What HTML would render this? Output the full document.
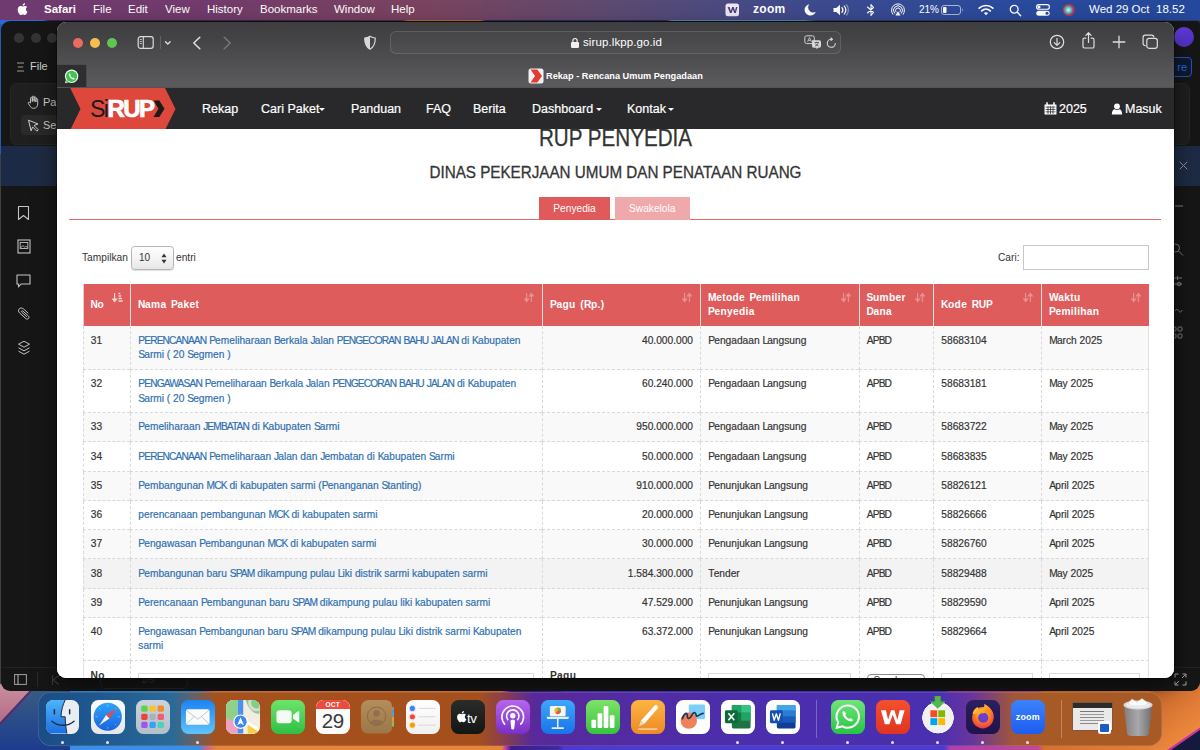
<!DOCTYPE html>
<html lang="id">
<head>
<meta charset="utf-8">
<title>Rekap - Rencana Umum Pengadaan</title>
<style>
*{box-sizing:border-box;margin:0;padding:0}
html,body{width:1200px;height:750px;overflow:hidden}
body{position:relative;font-family:"Liberation Sans",sans-serif;background:#3a2a6a;color:#fff}
.abs{position:absolute}
/* wallpaper */
#wall{left:0;top:0;width:1200px;height:750px;background:#2a55a8}
/* menubar */
#menubar{left:0;top:0;width:1200px;height:20px;background:linear-gradient(90deg,#6f3a70 0px,#713b6c 200px,#7a445f 430px,#5b4a72 620px,#3f4a8c 800px,#2b4a9c 1000px,#23489c 1200px);font-size:11.5px;line-height:19px;white-space:nowrap}
#menubar span{position:absolute;top:0}
/* back window */
#backwin{left:1px;top:21px;width:1198.500px;height:669.500px;background:#161616;border-radius:9px 3px 9px 9px;overflow:hidden}
/* safari */
#safari{left:57px;top:22px;width:1117px;height:656px;border-radius:9px;overflow:hidden;background:#fff;box-shadow:0 0 0 .5px rgba(0,0,0,.6),0 8px 22px rgba(0,0,0,.55)}
#toolbar{left:0;top:0;width:1117px;height:66px;background:linear-gradient(180deg,#3e3e40 0,#434345 15px,#535255 48px,#5b5a5d 64px,#505052 66px)}
#pinned{left:0;top:42px;width:30px;height:23px;background:#2e2e30;border-top:1px solid #4a4a4c;border-right:1px solid #4a4a4c}
#urlbar{left:333px;top:9px;width:451px;height:23px;border-radius:6px;background:rgba(255,255,255,.03);border:1px solid rgba(255,255,255,.12)}
#urltext{left:526px;top:13px;font-size:11.500px;line-height:15px;color:#fff;white-space:nowrap;letter-spacing:.1px}
#tabtitle{left:489px;top:47px;font-size:9.200px;line-height:14px;color:#fff;white-space:nowrap;font-weight:bold}
#navbar span{-webkit-text-stroke:.2px #fff;position:absolute;top:12.500px;font-size:12.500px;line-height:16px;color:#fff;white-space:nowrap}
#navbar i{position:absolute;top:19.500px;width:0;height:0;border-left:3px solid transparent;border-right:3px solid transparent;border-top:3.500px solid #fff}

#page .t{position:absolute;white-space:nowrap}
#h1{left:0;width:1117px;top:-7.700px;text-align:center;font-size:24.500px;line-height:34px;color:#333;transform:scaleX(.842);transform-origin:558.500px 0}
#h1,#h2{-webkit-text-stroke:.3px #333}
#h2{left:0;width:1117px;top:33.200px;text-align:center;font-size:16.500px;line-height:20px;color:#333;transform:scaleX(.9215);transform-origin:558px 0}
#tab1{left:482px;top:67.500px;width:71px;height:23px;background:#e05a5c;color:#fff;font-size:10.200px;line-height:23px;text-align:center}
#tab2{left:558px;top:67.500px;width:74.500px;height:23px;background:#f0a9aa;color:#fff;font-size:10.200px;line-height:23px;text-align:center}
#rule{left:12px;top:90px;width:1092px;height:1px;background:#e46c6c}
#lenlbl{left:25px;top:121.700px;font-size:10.200px;line-height:14px;color:#333}
#lensel{left:74px;top:116.500px;width:42.500px;height:24px;border:1px solid #b4b4b4;border-radius:3.500px;background:linear-gradient(180deg,#fff 0,#f4f4f4 50%,#e6e6e6 100%);box-shadow:0 1px 1px rgba(0,0,0,.12);font-size:10px;line-height:22px;color:#333;padding-left:7px}
#entri{left:119px;top:121.700px;font-size:10.200px;line-height:14px;color:#333}
#cari{left:941px;top:121.700px;font-size:10.200px;line-height:14px;color:#333}
#search{left:966px;top:116px;width:126px;height:24.500px;border:1px solid #c8c8c8;background:#fff}
#tbl{position:absolute;left:25.500px;top:154.700px;width:1066.500px;border-collapse:separate;border-spacing:0;table-layout:fixed;font-size:10.200px;line-height:14.200px;color:#333}
#tbl th{background:#de5c5c;color:#fff;font-weight:bold;text-align:left;vertical-align:middle;height:42.100px;padding:.6px 20px 0 7px;border-left:1.500px solid #e4e0e0;letter-spacing:.32px;word-spacing:1.500px;font-size:10.200px;position:relative}
#tbl th:first-child{border-left:1px solid #dcd0d0}
#tbl td{vertical-align:top;padding:7.300px 8px 0 7.300px;border-left:1px dashed #d9d9d9;border-bottom:1px dashed #d9d9d9;height:29.250px;white-space:nowrap}
#tbl td:last-child{border-right:1px solid #e2e2e2}
#tbl tr.two td{height:43px}
#tbl tbody tr:first-child td{height:44.400px;padding-top:8.400px}
#tbl tr.odd td{background:#f9f9f9}
#tbl tr.hov td{background:#f3f3f3}
#tbl td.r{text-align:right;padding-right:7px}
#tbl td{-webkit-text-stroke:.18px #333}
#tbl td a{color:#2f6fb0;text-decoration:none;-webkit-text-stroke:.18px #2f6fb0}
#tbl tfoot th:first-child{border-left:1px solid #e2e2e2}
#tbl tfoot th:last-child{border-right:1px solid #e2e2e2}
#tbl tfoot th{background:#fff;color:#333;height:30px;border-left:1px dashed #d9d9d9;vertical-align:top;padding-top:8px}
#tbl u{text-decoration:none;letter-spacing:-.87px}
#tbl th u{letter-spacing:-.3px}
.fi{height:20px;border:1px solid #dcdcdc;margin-top:4.500px;margin-right:-12px;background:#fff}
.sort{position:absolute;right:8px;top:8px;width:10px;height:11px;opacity:.32}
/*DOCKCSS*/
#dock{left:38px;top:692px;width:1124px;height:53.500px;border-radius:13px;background:linear-gradient(90deg,#1b4d86 0,#1f5890 60px,#2a6a98 135px,#6a6060 158px,#a5511d 178px,#a5501c 440px,#8a3f4a 465px,#58299a 495px,#4a2eac 700px,#4a2fb0 900px,#6a359c 935px,#a0563a 975px,#a85a26 1010px,#a85a26 1124px);box-shadow:0 0 0 .5px rgba(255,255,255,.22) inset}
.di{position:absolute;top:8px;width:33.500px;height:33.500px;border-radius:7.500px;overflow:hidden}
.dot{position:absolute;top:48.500px;width:3px;height:3px;border-radius:50%;background:#e8dff5}
/*DOCKCSSE*/
.tl{width:10px;height:10px;border-radius:50%;top:15.500px}
#navbar{left:0;top:66px;width:1117px;height:41px;background:#29292b}
#page{left:0;top:107px;width:1117px;height:549px;background:#fff;color:#333}
</style>
</head>
<body>
<div id="wall" class="abs"><svg class="abs" style="left:0;top:0" width="1200" height="750" viewBox="0 0 1200 750">
<defs>
<linearGradient id="wtop" x1="0" y1="0" x2="1" y2="0"><stop offset="0" stop-color="#2a6ad8"/><stop offset=".036" stop-color="#2a6ad8"/><stop offset=".04" stop-color="#3a2450"/><stop offset=".335" stop-color="#4a2a50"/><stop offset=".34" stop-color="#c06a30"/><stop offset=".4" stop-color="#c06a30"/><stop offset=".405" stop-color="#2a2a6a"/><stop offset=".555" stop-color="#2a2a6a"/><stop offset=".56" stop-color="#4a8ab0"/><stop offset=".67" stop-color="#4a8ab0"/><stop offset=".68" stop-color="#2a3a6a"/><stop offset="1" stop-color="#2a3a6a"/></linearGradient>
<linearGradient id="wbl" x1="0" y1="0" x2="0" y2="1"><stop offset="0" stop-color="#3b5f82"/><stop offset="1" stop-color="#1d3c8e"/></linearGradient>
<linearGradient id="wpk" x1="0" y1="0" x2="0" y2="1"><stop offset="0" stop-color="#c9909f"/><stop offset="1" stop-color="#b26c88"/></linearGradient>
<linearGradient id="wbot" x1="0" y1="0" x2="1200" y2="0" gradientUnits="userSpaceOnUse"><stop offset="0" stop-color="#1d3c8e"/><stop offset=".05" stop-color="#2a62c0"/><stop offset=".058" stop-color="#3b8ee8"/><stop offset=".166" stop-color="#3b8ee8"/><stop offset=".172" stop-color="#d0608a"/><stop offset=".18" stop-color="#e6843a"/><stop offset=".418" stop-color="#e6843a"/><stop offset=".421" stop-color="#d040a0"/><stop offset=".426" stop-color="#3a1f8a"/><stop offset=".465" stop-color="#3d2aa0"/><stop offset=".47" stop-color="#4a3cd0"/><stop offset=".787" stop-color="#4a3cd0"/><stop offset=".792" stop-color="#b040a8"/><stop offset=".865" stop-color="#c04898"/><stop offset=".87" stop-color="#d8702e"/><stop offset="1" stop-color="#e8853a"/></linearGradient>
<linearGradient id="wor" x1="0" y1="0" x2=".6" y2="1"><stop offset="0" stop-color="#c5622a"/><stop offset="1" stop-color="#f08c3e"/></linearGradient>
</defs>
<rect x="0" y="18" width="1200" height="6" fill="url(#wtop)"/>
<rect x="0" y="24" width="3" height="130" fill="#2a5ab0"/><rect x="0" y="154" width="3" height="540" fill="#404040"/>
<rect x="1197" y="24" width="3" height="670" fill="#2a52a8"/>
<rect x="0" y="684" width="1200" height="66" fill="url(#wbot)"/>
<rect x="0" y="684" width="70" height="66" fill="url(#wbl)"/>
<path d="M0 684h36L0 722.500z" fill="url(#wpk)"/>
<path d="M36 684L0 722.500v3L38.500 684z" fill="#5a2a6a"/>
<rect x="1150" y="684" width="50" height="66" fill="url(#wor)"/>
<path d="M1170 750l30-20.500v20.500z" fill="#141a3c"/>
<path d="M1167 750l33-22.500v2.500L1171 750z" fill="#c030a8"/>
</svg></div>
<div id="menubar" class="abs">
<svg class="abs" style="left:16px;top:2px" width="12" height="14" viewBox="0 0 12 14"><path fill="#fff" d="M9.9 7.4c0-1.5 1.2-2.2 1.3-2.3-.7-1-1.800-1.200-2.200-1.200-.9-.1-1.800.55-2.300.55s-1.200-.54-2-.52C3.700 3.950 2.700 4.500 2.200 5.400c-1.100 1.900-.3 4.600.75 6.100.5.750 1.100 1.580 1.900 1.550.77-.03 1.060-.5 1.990-.5s1.190.5 2 .48c.83-.01 1.350-.75 1.850-1.500.58-.86.820-1.700.830-1.740-.02-.01-1.600-.61-1.620-2.390zM8.400 2.900c.42-.51.700-1.220.630-1.930-.6.020-1.340.400-1.770.910-.39.450-.73 1.170-.64 1.860.670.050 1.360-.340 1.780-.84z"/></svg>

<svg class="abs" style="left:725px;top:3px" width="15" height="14" viewBox="0 0 15 14"><rect x=".5" y=".5" width="13.500" height="12.800" rx="2.500" fill="#ece6f2"/><path d="M2.600 4h2l1.200 4 1.400-4h1.500l1.300 4 1-4h1.500l-1.700 6h-1.600L7.900 6.200 6.600 10H5z" fill="#4a3f78"/></svg>
<svg class="abs" style="left:804px;top:4px" width="13" height="12" viewBox="0 0 13 12"><path fill="#fff" d="M5.200.3C3.600 2.300 3.800 5.300 5.700 7.100c1.600 1.600 4 1.900 6 1-.9 2-2.900 3.400-5.300 3.400C3.200 11.500.6 8.900.6 5.700.6 3.200 2.600.8 5.200.3z"/></svg>
<svg class="abs" style="left:833px;top:4px" width="18" height="12" viewBox="0 0 18 12"><path fill="#fff" d="M.5 4h2.800L7 .8v10.400L3.300 8H.5z"/><path d="M9 3.600c1 1.300 1 3.500 0 4.800M11.300 2c1.800 2.300 1.800 5.700 0 8" fill="none" stroke="#fff" stroke-width="1.200" stroke-linecap="round"/><path d="M13.600.8c2.300 3 2.300 7.400 0 10.400" fill="none" stroke="#fff" stroke-opacity=".45" stroke-width="1.100" stroke-linecap="round"/></svg>
<svg class="abs" style="left:866px;top:3px" width="10" height="14" viewBox="0 0 10 14"><path d="M1.500 4l6 5.500L5 12.500V1.500L7.500 4.500 1.500 10" fill="none" stroke="#fff" stroke-width="1.100" stroke-linejoin="round" stroke-linecap="round"/></svg>
<svg class="abs" style="left:890px;top:3px" width="16" height="14" viewBox="0 0 16 14"><g fill="none" stroke="#fff" stroke-width="1" stroke-linecap="round"><path d="M2.800 11.300A6.500 6.500 0 1 1 13.200 11.300"/><path d="M4.500 10.200A4.500 4.500 0 1 1 11.500 10.200"/><path d="M6 9A2.500 2.500 0 1 1 10 9"/></g><path d="M8 8.300l2.600 4.200H5.400z" fill="#fff"/></svg>
<svg class="abs" style="left:941px;top:5px" width="23" height="10" viewBox="0 0 23 10"><rect x=".5" y=".5" width="19" height="9" rx="2.500" fill="none" stroke="#fff" stroke-opacity=".6"/><rect x="2" y="2" width="3.500" height="6" rx="1" fill="#fff"/><path d="M21 3.300c.9.300.9 3.100 0 3.400z" fill="#fff" fill-opacity=".6"/></svg>
<svg class="abs" style="left:978px;top:4px" width="16" height="12" viewBox="0 0 16 12"><g fill="none" stroke="#fff" stroke-width="1.700" stroke-linecap="round"><path d="M1.200 4.200C5 .6 11 .6 14.800 4.200"/><path d="M3.700 6.800c2.500-2.300 6.100-2.300 8.600 0"/></g><path d="M8 11.300L5.900 9c1.200-1 3-1 4.200 0z" fill="#fff"/></svg>
<svg class="abs" style="left:1009px;top:4px" width="13" height="13" viewBox="0 0 13 13"><circle cx="5.200" cy="5.200" r="3.900" fill="none" stroke="#fff" stroke-width="1.300"/><path d="M8.100 8.100l3.600 3.600" stroke="#fff" stroke-width="1.400" stroke-linecap="round"/></svg>
<svg class="abs" style="left:1036px;top:4px" width="14" height="12" viewBox="0 0 14 12"><rect x=".6" y=".6" width="12.800" height="4.600" rx="2.300" fill="none" stroke="#fff" stroke-width="1.100"/><circle cx="3" cy="2.900" r="1.500" fill="#fff"/><rect x=".3" y="6.700" width="13.400" height="5" rx="2.500" fill="#fff"/><circle cx="11" cy="9.200" r="1.500" fill="#2b4a9c"/></svg>
<svg class="abs" style="left:1062px;top:3px" width="14" height="14" viewBox="0 0 14 14"><defs><radialGradient id="siri" cx=".45" cy=".5" r=".6"><stop offset="0" stop-color="#e8f4ff"/><stop offset=".35" stop-color="#4fd0c8"/><stop offset=".65" stop-color="#b0405c"/><stop offset="1" stop-color="#5a3a7a"/></radialGradient></defs><circle cx="7" cy="7" r="6.300" fill="url(#siri)"/></svg>
<span style="left:44px;font-weight:bold">Safari</span>
<span style="left:93px">File</span>
<span style="left:128px">Edit</span>
<span style="left:165px">View</span>
<span style="left:207px">History</span>
<span style="left:260px">Bookmarks</span>
<span style="left:334px">Window</span>
<span style="left:391px">Help</span>
<span style="left:753px;font-weight:bold;font-size:12px;letter-spacing:.3px">zoom</span>
<span style="left:919px;font-size:10px">21%</span>
<span style="left:1089px">Wed 29 Oct</span>
<span style="left:1156px">18.52</span>
</div>
<div id="backwin" class="abs">
  <div class="abs" style="left:13px;top:11.500px;width:10px;height:10px;border-radius:50%;background:#343434"></div>
  <div class="abs" style="left:30px;top:11.500px;width:10px;height:10px;border-radius:50%;background:#343434"></div>
  <div class="abs" style="left:46px;top:11.500px;width:10px;height:10px;border-radius:50%;background:#343434"></div>
  <svg class="abs" style="left:15px;top:41px" width="9" height="10" viewBox="0 0 9 10"><path d="M1 1h7M1.800 5h5.400M1 9h7" stroke="#bdbdbd" stroke-width=".8"/></svg>
  <div class="abs" style="left:29px;top:37px;font-size:11px;line-height:16px;color:#d0d0d0">File</div>
  <div class="abs" style="left:9px;top:62px;width:70px;height:62px;border-radius:6px;background:#1f1f1f;border:1px solid #262626"></div>
  <div class="abs" style="left:20px;top:94px;width:50px;height:20px;border-radius:4px;background:#2a2a2a"></div>
  <svg class="abs" style="left:26px;top:74px" width="13" height="14" viewBox="0 0 13 14"><path d="M3.500 8V3.200a.9.900 0 0 1 1.800 0V6.500 2a.9.900 0 0 1 1.800 0V6.500 2.700a.9.900 0 0 1 1.800 0V7 4.500a.9.900 0 0 1 1.800 0V9c0 2.500-1.500 4.300-4 4.300-2 0-3-1-4-2.600L1.300 8.300c-.5-.9.600-1.600 1.300-.9z" fill="none" stroke="#cfcfcf" stroke-width=".9" stroke-linejoin="round"/></svg>
  <div class="abs" style="left:42px;top:73px;font-size:11px;line-height:16px;color:#cfcfcf">Pa</div>
  <svg class="abs" style="left:26px;top:98px" width="13" height="13" viewBox="0 0 13 13"><path d="M1.500 1.200l9.500 3.800-4 1.500 4.300 4.300-1.400 1.400-4.300-4.300-1.500 4z" fill="none" stroke="#cfcfcf" stroke-width="1" stroke-linejoin="round"/></svg>
  <div class="abs" style="left:42px;top:96px;font-size:11px;line-height:16px;color:#cfcfcf">Se</div>
  <div class="abs" style="left:0;top:125px;width:1199px;height:40px;background:linear-gradient(90deg,#1c2a48 0,#202c42 60px,#202c42 1140px,#1d2a44 1199px)"></div>
  <svg class="abs" style="left:1178px;top:140px" width="9" height="9" viewBox="0 0 9 9"><path d="M.7.700l7.600 7.600M8.300.7L.7 8.300" stroke="#8a93a5" stroke-width="1"/></svg>
  <svg class="abs" style="left:16px;top:184px" width="13" height="16" viewBox="0 0 13 16"><path d="M1.500 1.500h10v13l-5-4-5 4z" fill="none" stroke="#c4c4c4" stroke-width="1.100" stroke-linejoin="round"/></svg>
  <svg class="abs" style="left:16px;top:218px" width="14" height="15" viewBox="0 0 14 15"><rect x="1" y="1" width="12" height="13" fill="none" stroke="#c4c4c4" stroke-width="1.100"/><rect x="3.200" y="3.500" width="7.600" height="6" fill="none" stroke="#c4c4c4" stroke-width=".9"/><path d="M3.500 9l2.300-2.500 1.800 1.700 1.200-1 2 1.800" fill="none" stroke="#c4c4c4" stroke-width=".8"/></svg>
  <svg class="abs" style="left:15px;top:253px" width="15" height="14" viewBox="0 0 15 14"><path d="M1 1h13v9H5l-2.500 2.800V10H1z" fill="none" stroke="#c4c4c4" stroke-width="1.100" stroke-linejoin="round"/></svg>
  <svg class="abs" style="left:15px;top:284px" width="15" height="16" viewBox="0 0 15 16"><path d="M11 6.500L6.300 2.300C5 1.200 3.200 1.300 2.200 2.400S1.300 5.300 2.500 6.400l6.300 5.700c.8.700 2 .7 2.700-.1s.6-2-.2-2.700L5.800 4.500c-.4-.3-.9-.3-1.200 0s-.2.900.1 1.200l4.800 4.300" fill="none" stroke="#c4c4c4" stroke-width="1" stroke-linecap="round" transform="translate(1 1.500)"/></svg>
  <svg class="abs" style="left:16px;top:319px" width="14" height="16" viewBox="0 0 14 16"><path d="M7 1.200l5.500 3L7 7.200l-5.500-3z M1.500 7.800L7 10.800l5.500-3M1.500 11.200l5.500 3 5.500-3" fill="none" stroke="#c4c4c4" stroke-width="1" stroke-linejoin="round"/></svg>
  <div class="abs" style="left:1173px;top:6px;width:20px;height:20px;border-radius:50%;background:linear-gradient(135deg,#6a3fe0,#4a2ec0)"></div>
  <div class="abs" style="left:1160px;top:35.500px;width:31px;height:20px;border-radius:4px;border:1px solid #1f55c0;background:#0f1a30;color:#2a6ae0;font-size:11px;line-height:18px;text-align:right;padding-right:4px">re</div>
  <div class="abs" style="left:1120px;top:62px;width:69px;height:62px;border-radius:6px;background:#1f1f1f;border:1px solid #262626"></div>
  <svg class="abs" style="left:1173px;top:180px" width="14" height="160" viewBox="0 0 14 160"><g fill="none" stroke="#808080" stroke-width="1"><path d="M1 5h8"/><circle cx="1.500" cy="47" r="4"/><path d="M4.500 50l4.500 4.500"/><path d="M0 77h8M0 83h8M3.500 75v4"/><circle cx="5" cy="83" r="1.800"/><path d="M1 110c1-2 3-2 4 0s3 1 3-1"/><rect x="-2" y="126" width="4" height="4" rx="1"/><rect x="4" y="126" width="4" height="4" rx="1"/><rect x="-2" y="133" width="4" height="4" rx="1"/><rect x="4" y="133" width="4" height="4" rx="1"/></g></svg>
  <div class="abs" style="left:0;top:646px;width:1199px;height:1px;background:#232323"></div>
  <svg class="abs" style="left:13px;top:653px" width="13" height="11" viewBox="0 0 13 11"><rect x=".6" y=".6" width="11.800" height="9.800" fill="none" stroke="#a0a0a0" stroke-width="1"/><path d="M4 .6v9.800" stroke="#a0a0a0" stroke-width="1.200"/></svg>
  <div class="abs" style="left:36px;top:651px;width:1px;height:15px;background:#2a2a2a"></div>
  <svg class="abs" style="left:50px;top:654px" width="10" height="10" viewBox="0 0 10 10"><path d="M1.500 0v10M8 .5L2 5l6 4.500" fill="none" stroke="#3c3c3c" stroke-width="1.100"/></svg>
  <div class="abs" style="left:99px;top:650px;width:88px;height:18px;border:1px solid #242424;border-radius:5px;color:#3a3a3a;font-size:9.500px;line-height:16px;padding-left:40px">1/5</div>
  <svg class="abs" style="left:1173px;top:652px" width="13" height="13" viewBox="0 0 13 13"><path d="M1 4.500V1h3.500M8.500 1H12v3.500M12 8.500V12H8.500M4.500 12H1V8.500M8 5l3.500-3.500M5 8L1.500 11.500" fill="none" stroke="#a8a8a8" stroke-width="1"/></svg>
</div>
<div id="safari" class="abs">
  <div id="toolbar" class="abs">
    <div class="abs tl" style="left:16px;background:#ec6a5e"></div>
    <div class="abs tl" style="left:33px;background:#f4bf4f"></div>
    <div class="abs tl" style="left:49.500px;background:#61c554"></div>
    <svg class="abs" style="left:80px;top:13px" width="36" height="16" viewBox="0 0 36 16"><rect x="1.200" y="1.700" width="15" height="11.600" rx="2.300" fill="none" stroke="#dcdcdc" stroke-width="1.200"/><path d="M6.300 2v11" stroke="#dcdcdc" stroke-width="1.100"/><path d="M2.800 4.500h2M2.800 6.500h2M2.800 8.500h2" stroke="#dcdcdc" stroke-width=".8"/><path d="M23.500 1v13" stroke="#6a6a6c" stroke-width=".8"/><path d="M28.500 6.800l2.300 2.300 2.300-2.300" fill="none" stroke="#e6e6e6" stroke-width="1.300" stroke-linecap="round" stroke-linejoin="round"/></svg>
    <svg class="abs" style="left:134px;top:13px" width="12" height="16" viewBox="0 0 12 16"><path d="M8.800 2.300L2.800 8l6 5.700" fill="none" stroke="#e0e0e0" stroke-width="1.500" stroke-linecap="round" stroke-linejoin="round"/></svg>
    <svg class="abs" style="left:164px;top:13px" width="12" height="16" viewBox="0 0 12 16"><path d="M3.200 2.300L9.200 8l-6 5.700" fill="none" stroke="#77777a" stroke-width="1.500" stroke-linecap="round" stroke-linejoin="round"/></svg>
    <svg class="abs" style="left:306px;top:13px" width="14" height="16" viewBox="0 0 14 16"><path d="M7 1.300c1.800 1.100 3.600 1.600 5.300 1.700 0 5-1.300 8.900-5.300 11.300C3 11.900 1.700 8 1.700 3 3.400 2.900 5.200 2.400 7 1.300z" fill="none" stroke="#d8d8d8" stroke-width="1.200" stroke-linejoin="round"/><path d="M7 1.300C5.200 2.400 3.400 2.900 1.700 3c0 5 1.300 8.900 5.300 11.300z" fill="#d8d8d8"/></svg>
    <div id="urlbar" class="abs"></div>
    <svg class="abs" style="left:513px;top:15px" width="10" height="12" viewBox="0 0 10 12"><rect x="1" y="5" width="8" height="6" rx="1.200" fill="#f0f0f0"/><path d="M2.900 5.200V3.600a2.100 2.100 0 0 1 4.200 0v1.600" fill="none" stroke="#f0f0f0" stroke-width="1.200"/></svg>
    <div id="urltext" class="abs">sirup.lkpp.go.id</div>
    <svg class="abs" style="left:747px;top:13px" width="18" height="15" viewBox="0 0 18 15"><rect x=".8" y=".8" width="9.500" height="7.800" rx="1.800" fill="none" stroke="#d0d0d0" stroke-width="1"/><path d="M3.600 6.800L5.500 2.500 7.400 6.800M4.300 5.400h2.400" fill="none" stroke="#d0d0d0" stroke-width=".8"/><path d="M8 5.200h7.200a1.800 1.800 0 0 1 1.800 1.800v4a1.800 1.800 0 0 1-1.800 1.800H14l-1.500 1.800V12.800H9.800A1.800 1.800 0 0 1 8 11z" fill="#d8d8d8"/><path d="M10.500 7.500h4.500M12.700 6.700v.8M11 11c2-.6 3-1.800 3.300-3.400M11.400 8.500c.6 1.200 1.700 2 3.200 2.500" fill="none" stroke="#48484a" stroke-width=".8"/></svg>
    <svg class="abs" style="left:769px;top:14px" width="11" height="13" viewBox="0 0 11 13"><path d="M9.300 7.500A4 4 0 1 1 5.400 3.300" fill="none" stroke="#d8d8d8" stroke-width="1.100" stroke-linecap="round"/><path d="M4.700 1l2.600 2.300-2.600 2.200z" fill="#d8d8d8"/></svg>
    <svg class="abs" style="left:992px;top:12px" width="16" height="16" viewBox="0 0 16 16"><circle cx="8" cy="8" r="6.700" fill="none" stroke="#dedede" stroke-width="1.200"/><path d="M8 4.300v7M5.200 8.600L8 11.400l2.800-2.800" fill="none" stroke="#dedede" stroke-width="1.200" stroke-linecap="round" stroke-linejoin="round"/></svg>
    <svg class="abs" style="left:1024px;top:9px" width="15" height="19" viewBox="0 0 15 19"><path d="M4.800 7.200H3.400A1.400 1.400 0 0 0 2 8.600v7A1.400 1.400 0 0 0 3.400 17h8.200a1.400 1.400 0 0 0 1.400-1.400v-7a1.400 1.400 0 0 0-1.400-1.400h-1.400" fill="none" stroke="#dedede" stroke-width="1.200" stroke-linecap="round"/><path d="M7.500 11.500V2M4.900 4.300L7.500 1.700l2.600 2.600" fill="none" stroke="#dedede" stroke-width="1.200" stroke-linecap="round" stroke-linejoin="round"/></svg>
    <svg class="abs" style="left:1055px;top:13px" width="14" height="14" viewBox="0 0 14 14"><path d="M7 1.200v11.600M1.200 7h11.600" stroke="#dedede" stroke-width="1.300" stroke-linecap="round"/></svg>
    <svg class="abs" style="left:1085px;top:12px" width="17" height="16" viewBox="0 0 17 16"><rect x="4.800" y="4.300" width="10.500" height="10" rx="2.200" fill="none" stroke="#dedede" stroke-width="1.200"/><path d="M3.600 11.700H3.300A2.200 2.200 0 0 1 1.100 9.500V3.300A2.200 2.200 0 0 1 3.300 1.100h6.300a2.200 2.200 0 0 1 2.200 2.200" fill="none" stroke="#dedede" stroke-width="1.200"/></svg>
    <div id="pinned" class="abs"><svg class="abs" style="left:7px;top:4px" width="15" height="15" viewBox="0 0 15 15"><circle cx="7.600" cy="7.300" r="6.700" fill="#fff"/><path d="M1 14.300l1.100-3.700 2.400 2.600z" fill="#fff"/><circle cx="7.600" cy="7.300" r="5.600" fill="#3fc351"/><path d="M1.900 13.400l.8-2.600 1.700 1.800z" fill="#3fc351"/><path d="M5.400 4.200c-.5.300-.8 1-.6 1.800.5 2 2.300 3.800 4.300 4.400.8.200 1.500-.1 1.800-.7l-1.400-1.200-.9.500c-.9-.4-1.800-1.300-2.200-2.200l.5-.9z" fill="#fff"/></svg></div>
    <svg class="abs" style="left:471px;top:46px" width="16" height="16" viewBox="0 0 16 16"><rect x=".5" y=".5" width="15" height="15" rx="2.500" fill="#f2f2f2"/><path d="M2.500 1.500h6.800L14 8l-4.700 6.500H2.500L7 8z" fill="#e03c31"/></svg>
    <div id="tabtitle" class="abs">Rekap - Rencana Umum Pengadaan</div>
  </div>
  <div id="navbar" class="abs">
    <svg class="abs" style="left:12px;top:0" width="108" height="42" viewBox="0 0 108 42"><path d="M1.200 0H96l10.500 21L96 42H1.200l10.300-21z" fill="#de473c"/><path d="M84.500 12.500h5.800l5.200 8.300-5.200 8.200h-5.800l5-8.200z" fill="#1b1b1b"/><text x="21" y="29" font-family="Liberation Sans, sans-serif" font-size="23" fill="#1b1b1b" letter-spacing="-1.800" textLength="17" lengthAdjust="spacingAndGlyphs">Si</text><text x="38.500" y="29" font-family="Liberation Sans, sans-serif" font-size="23" font-weight="bold" fill="#fff" stroke="#fff" stroke-width=".7" letter-spacing="-1.500" textLength="46" lengthAdjust="spacingAndGlyphs">RUP</text></svg>
    <span id="n1" style="left:145px">Rekap</span>
    <span id="n2" style="left:204px">Cari Paket</span><i style="left:262px"></i>
    <span id="n3" style="left:294px">Panduan</span>
    <span id="n4" style="left:369px">FAQ</span>
    <span id="n5" style="left:416px">Berita</span>
    <span id="n6" style="left:475px">Dashboard</span><i style="left:538.500px"></i>
    <span id="n7" style="left:570px">Kontak</span><i style="left:610.500px"></i>
    <svg class="abs" style="left:986.500px;top:13.500px" width="13" height="13" viewBox="0 0 12 12"><path d="M.5 2.200h11v9.300H.5z" fill="#fff"/><path d="M2.800.3v2.500M9.200.3v2.500" stroke="#fff" stroke-width="1.400"/><path d="M1.500 4.700h9M1.500 6.900h9M1.500 9.100h9M3.700 4v7M6 4v7M8.300 4v7" stroke="#29292b" stroke-width=".7"/></svg>
    <span id="n8" style="left:1002px">2025</span>
    <svg class="abs" style="left:1054px;top:15px" width="12" height="12" viewBox="0 0 12 12"><circle cx="6" cy="3.300" r="2.900" fill="#fff"/><path d="M.8 11.500c0-3.600 1.500-5.300 3.200-5.300.6.500 1.300.7 2 .7s1.400-.2 2-.7c1.700 0 3.200 1.700 3.200 5.300z" fill="#fff"/></svg>
    <span id="n9" style="left:1068px">Masuk</span>
  </div>
  <div id="page" class="abs">
    <div id="h1" class="t">RUP PENYEDIA</div>
    <div id="h2" class="t">DINAS PEKERJAAN UMUM DAN PENATAAN RUANG</div>
    <div id="rule" class="abs"></div>
    <div id="tab1" class="t">Penyedia</div>
    <div id="tab2" class="t">Swakelola</div>
    <div id="lenlbl" class="t">Tampilkan</div>
    <div id="lensel" class="t">10<svg class="abs" style="right:6px;top:6px" width="6" height="11" viewBox="0 0 6 11"><path d="M3 .5L5.500 4.300H.5zM3 10.500L5.500 6.700H.5z" fill="#333"/></svg></div>
    <div id="entri" class="t">entri</div>
    <div id="cari" class="t">Cari:</div>
    <div id="search" class="abs"></div>
    <table id="tbl">
      <colgroup><col style="width:47.500px"><col style="width:412px"><col style="width:158px"><col style="width:158.500px"><col style="width:74.500px"><col style="width:108px"><col style="width:108px"></colgroup>
      <thead><tr><th><u>N</u>o<svg class="sort" style="opacity:.75;right:7px;width:11px" viewBox="0 0 11 11"><path d="M2.600 1v8M.6 7l2 2.600 2-2.600z" stroke="#fff" stroke-width="1.200" fill="#fff"/><path d="M6.500 1.500h1.800M6.500 4h2.600M6.500 6.500h3.400M6.500 9h4.200" stroke="#fff" stroke-width="1.500"/></svg></th><th><u>N</u>ama <u>P</u>aket<svg class="sort" viewBox="0 0 10 11"><path d="M2.600 1v8M.6 7l2 2.600 2-2.600z" stroke="#fff" stroke-width="1.200" fill="#fff"/><path d="M7.400 10V2M5.400 4l2-2.600 2 2.600z" stroke="#fff" stroke-width="1.200" fill="#fff"/></svg></th><th><u>P</u>agu (<u>R</u>p.)<svg class="sort" viewBox="0 0 10 11"><path d="M2.600 1v8M.6 7l2 2.600 2-2.600z" stroke="#fff" stroke-width="1.200" fill="#fff"/><path d="M7.400 10V2M5.400 4l2-2.600 2 2.600z" stroke="#fff" stroke-width="1.200" fill="#fff"/></svg></th><th><u>M</u>etode <u>P</u>emilihan<br><u>P</u>enyedia<svg class="sort" viewBox="0 0 10 11"><path d="M2.600 1v8M.6 7l2 2.600 2-2.600z" stroke="#fff" stroke-width="1.200" fill="#fff"/><path d="M7.400 10V2M5.400 4l2-2.600 2 2.600z" stroke="#fff" stroke-width="1.200" fill="#fff"/></svg></th><th><u>S</u>umber<br><u>D</u>ana<svg class="sort" viewBox="0 0 10 11"><path d="M2.600 1v8M.6 7l2 2.600 2-2.600z" stroke="#fff" stroke-width="1.200" fill="#fff"/><path d="M7.400 10V2M5.400 4l2-2.600 2 2.600z" stroke="#fff" stroke-width="1.200" fill="#fff"/></svg></th><th><u>K</u>ode <u>RUP</u><svg class="sort" viewBox="0 0 10 11"><path d="M2.600 1v8M.6 7l2 2.600 2-2.600z" stroke="#fff" stroke-width="1.200" fill="#fff"/><path d="M7.400 10V2M5.400 4l2-2.600 2 2.600z" stroke="#fff" stroke-width="1.200" fill="#fff"/></svg></th><th><u>W</u>aktu<br><u>P</u>emilihan<svg class="sort" viewBox="0 0 10 11"><path d="M2.600 1v8M.6 7l2 2.600 2-2.600z" stroke="#fff" stroke-width="1.200" fill="#fff"/><path d="M7.400 10V2M5.400 4l2-2.600 2 2.600z" stroke="#fff" stroke-width="1.200" fill="#fff"/></svg></th></tr></thead>
      <tbody>
<tr class="odd two"><td>31</td><td><a id="l31"><u>PERENCANAAN</u> <u>P</u>emeliharaan <u>B</u>erkala <u>J</u>alan <u>PENGECORAN</u> <u>BAHU</u> <u>JALAN</u> di <u>K</u>abupaten<br><u>S</u>armi ( 20 <u>S</u>egmen )</a></td><td class="r">40.000.000</td><td><u>P</u>engadaan <u>L</u>angsung</td><td><u>APBD</u></td><td>58683104</td><td><u>M</u>arch 2025</td></tr>
<tr class="two"><td>32</td><td><a id="l32"><u>PENGAWASAN</u> <u>P</u>emeliharaan <u>B</u>erkala <u>J</u>alan <u>PENGECORAN</u> <u>BAHU</u> <u>JALAN</u> di <u>K</u>abupaten<br><u>S</u>armi ( 20 <u>S</u>egmen )</a></td><td class="r">60.240.000</td><td><u>P</u>engadaan <u>L</u>angsung</td><td><u>APBD</u></td><td>58683181</td><td><u>M</u>ay 2025</td></tr>
<tr class="odd"><td>33</td><td><a id="l33"><u>P</u>emeliharaan <u>JEMBATAN</u> di <u>K</u>abupaten <u>S</u>armi</a></td><td class="r">950.000.000</td><td><u>P</u>engadaan <u>L</u>angsung</td><td><u>APBD</u></td><td>58683722</td><td><u>M</u>ay 2025</td></tr>
<tr class=""><td>34</td><td><a id="l34"><u>PERENCANAAN</u> <u>P</u>emeliharaan <u>J</u>alan dan <u>J</u>embatan di <u>K</u>abupaten <u>S</u>armi</a></td><td class="r">50.000.000</td><td><u>P</u>engadaan <u>L</u>angsung</td><td><u>APBD</u></td><td>58683835</td><td><u>M</u>ay 2025</td></tr>
<tr class="odd"><td>35</td><td><a id="l35"><u>P</u>embangunan <u>MCK</u> di kabupaten sarmi (<u>P</u>enanganan <u>S</u>tanting)</a></td><td class="r">910.000.000</td><td><u>P</u>enunjukan <u>L</u>angsung</td><td><u>APBD</u></td><td>58826121</td><td><u>A</u>pril 2025</td></tr>
<tr class=""><td>36</td><td><a id="l36">perencanaan pembangunan <u>MCK</u> di kabupaten sarmi</a></td><td class="r">20.000.000</td><td><u>P</u>enunjukan <u>L</u>angsung</td><td><u>APBD</u></td><td>58826666</td><td><u>A</u>pril 2025</td></tr>
<tr class="odd"><td>37</td><td><a id="l37"><u>P</u>engawasan <u>P</u>embangunan <u>MCK</u> di kabupaten sarmi</a></td><td class="r">30.000.000</td><td><u>P</u>enunjukan <u>L</u>angsung</td><td><u>APBD</u></td><td>58826760</td><td><u>A</u>pril 2025</td></tr>
<tr class="hov"><td>38</td><td><a id="l38"><u>P</u>embangunan baru <u>SPAM</u> dikampung pulau <u>L</u>iki distrik sarmi kabupaten sarmi</a></td><td class="r">1.584.300.000</td><td><u>T</u>ender</td><td><u>APBD</u></td><td>58829488</td><td><u>M</u>ay 2025</td></tr>
<tr class="odd"><td>39</td><td><a id="l39"><u>P</u>erencanaan <u>P</u>embangunan baru <u>SPAM</u> dikampung pulau liki kabupaten sarmi</a></td><td class="r">47.529.000</td><td><u>P</u>enunjukan <u>L</u>angsung</td><td><u>APBD</u></td><td>58829590</td><td><u>A</u>pril 2025</td></tr>
<tr class="two"><td>40</td><td><a id="l40"><u>P</u>engawasan <u>P</u>embangunan baru <u>SPAM</u> dikampung pulau <u>L</u>iki distrik sarmi <u>K</u>abupaten<br>sarmi</a></td><td class="r">63.372.000</td><td><u>P</u>enunjukan <u>L</u>angsung</td><td><u>APBD</u></td><td>58829664</td><td><u>A</u>pril 2025</td></tr>
      </tbody>
      <tfoot><tr><th>No</th><th><div class="fi"></div></th><th>Pagu</th><th><div class="fi"></div></th><th><div class="fi" style="border-color:#8a8a8a;border-radius:4px;margin-top:5px;font-weight:normal;font-size:10px;line-height:11px;padding-left:6px;overflow:hidden">Sumber</div></th><th><div class="fi"></div></th><th><div class="fi"></div></th></tr></tfoot>
    </table>
  </div>
</div>
<!--DOCKS--><div id="dock" class="abs">
<svg width="0" height="0" style="position:absolute"><defs>
<linearGradient id="fnd" x1="0" y1="0" x2="0" y2="1"><stop offset="0" stop-color="#4eb4f8"/><stop offset="1" stop-color="#1b6fe4"/></linearGradient>
<linearGradient id="saf" x1="0" y1="0" x2="0" y2="1"><stop offset="0" stop-color="#2fa6f7"/><stop offset="1" stop-color="#1a63e0"/></linearGradient>
<linearGradient id="cont" x1="0" y1="0" x2="0" y2="1"><stop offset="0" stop-color="#b48d5c"/><stop offset="1" stop-color="#9c7748"/></linearGradient>
<radialGradient id="ffx" cx=".5" cy=".3" r=".8"><stop offset="0" stop-color="#ffd23a"/><stop offset=".5" stop-color="#ff7a1a"/><stop offset="1" stop-color="#e0245e"/></radialGradient>
<linearGradient id="ffx2" x1="0" y1="0" x2="1" y2="1"><stop offset="0" stop-color="#ffe14a"/><stop offset=".6" stop-color="#ff8a1f"/><stop offset="1" stop-color="#f0325a"/></linearGradient>
</defs></svg>
<div class="di" style="left:7.5px;background:#e9eef4;"><svg width="33.5" height="33.5" viewBox="0 0 34 34" style="position:absolute;left:0;top:0"><path d="M0 0h19.500c-2.500 5-4 10.500-4.300 17h4.200c.2 6 .7 11.500 1.800 17H0z" fill="url(#fnd)"/><path d="M8.500 10v4M24 10v4" stroke="#1d2b3d" stroke-width="1.500" stroke-linecap="round"/><path d="M6 21.500c6.500 5.500 16 5.500 22.500 0" fill="none" stroke="#1d2b3d" stroke-width="1.400" stroke-linecap="round"/><path d="M19.500 0c-2.500 5-4 10.500-4.300 17h4.200c.2 6 .7 11.500 1.800 17" fill="none" stroke="#1d2b3d" stroke-width="1"/></svg></div>
<div class="di" style="left:53px;background:linear-gradient(180deg,#fdfdfd,#e4e6ea);"><svg width="33.5" height="33.5" viewBox="0 0 34 34" style="position:absolute;left:0;top:0"><circle cx="17" cy="17" r="14.300" fill="url(#saf)"/><g stroke="#fff" stroke-width=".5" opacity=".7"><path d="M17 4.500v2.500M17 27v2.500M4.500 17h2.500M27 17h2.500M8.200 8.200l1.700 1.700M24.100 24.100l1.700 1.700M8.200 25.800l1.700-1.700M24.100 9.900l1.700-1.700"/></g><path d="M25.500 8.500L15.300 15.300 18.700 18.700z" fill="#f0483e"/><path d="M8.500 25.500l10.200-6.800-3.400-3.400z" fill="#f4f4f4"/></svg></div>
<div class="di" style="left:98px;background:linear-gradient(180deg,#c9d4dc,#b3c0ca);"><svg width="33.5" height="33.5" viewBox="0 0 34 34" style="position:absolute;left:0;top:0"><rect x="5.3" y="5.6" width="6.500" height="6.300" rx="1.600" fill="#62d14a"/><rect x="13.600000000000001" y="5.6" width="6.500" height="6.300" rx="1.600" fill="#f7c331"/><rect x="21.900000000000002" y="5.6" width="6.500" height="6.300" rx="1.600" fill="#f58a2a"/><rect x="5.3" y="13.9" width="6.500" height="6.300" rx="1.600" fill="#e8453c"/><rect x="13.600000000000001" y="13.9" width="6.500" height="6.300" rx="1.600" fill="#a9b2ba"/><rect x="21.900000000000002" y="13.9" width="6.500" height="6.300" rx="1.600" fill="#f25a7a"/><rect x="5.3" y="22.200000000000003" width="6.500" height="6.300" rx="1.600" fill="#a355e8"/><rect x="13.600000000000001" y="22.200000000000003" width="6.500" height="6.300" rx="1.600" fill="#3aa0f5"/><rect x="21.900000000000002" y="22.200000000000003" width="6.500" height="6.300" rx="1.600" fill="#4fd1b5"/></svg></div>
<div class="di" style="left:143px;background:linear-gradient(180deg,#1e82f2,#5fc3fb);"><svg width="33.5" height="33.5" viewBox="0 0 34 34" style="position:absolute;left:0;top:0"><rect x="5" y="9.500" width="24" height="15.500" rx="2" fill="#fafafa"/><path d="M5.500 10.500L17 19.500 28.500 10.500M5.500 24.500l8-8M28.500 24.500l-8-8" fill="none" stroke="#b9c2cc" stroke-width=".9"/></svg></div>
<div class="di" style="left:188px;background:#f3ede0;overflow:hidden"><svg width="33.5" height="33.5" viewBox="0 0 34 34" style="position:absolute;left:0;top:0"><rect width="34" height="34" fill="#f3ede0"/><path d="M0 0h12v34H0z" fill="#8fd18a"/><path d="M0 18l12 6v10H0z" fill="#f0a0c0"/><path d="M20 0h14v14c-6 0-11-4-14-14z" fill="#7fcf86"/><circle cx="31" cy="3" r="7" fill="none" stroke="#d8d8d8" stroke-width="3"/><path d="M22 34V22L34 30v4z" fill="#f6cf45"/><path d="M12 0h5.500v34H12z" fill="#4a90f0"/><path d="M17.500 20L34 31" stroke="#fff" stroke-width="3"/><circle cx="14.800" cy="22" r="6.800" fill="#3f86f0" stroke="#fff" stroke-width="1.200"/><path d="M14.800 17.500l3.400 8-3.400-1.800-3.400 1.800z" fill="#fff"/></svg></div>
<div class="di" style="left:233px;background:linear-gradient(180deg,#6ee36a,#2fbf45);"><svg width="33.5" height="33.5" viewBox="0 0 34 34" style="position:absolute;left:0;top:0"><rect x="5.500" y="10.500" width="15.500" height="13" rx="3" fill="#f4fbf4"/><path d="M22.300 15.300l5.200-3.800c.6-.4 1.200-.1 1.200.6v9.800c0 .7-.6 1-1.200.6l-5.200-3.800z" fill="#f4fbf4"/></svg></div>
<div class="di" style="left:278px;background:#fbfbfb;"><div style="position:absolute;left:0;top:0;width:100%;height:8.500px;background:#ee4b40;border-radius:7.500px 7.500px 0 0;color:#fff;font-weight:bold;font-size:6.500px;line-height:9px;text-align:center;letter-spacing:.2px">OCT</div><div style="position:absolute;left:0;top:8px;width:100%;text-align:center;font-size:20.500px;line-height:25px;color:#3a3a3c;letter-spacing:-.5px">29</div></div>
<div class="di" style="left:323px;background:transparent;"><svg width="33.5" height="33.5" viewBox="0 0 34 34" style="position:absolute;left:0;top:0"><path d="M31 7h2.500v5H31z" fill="#8a8f96"/><path d="M31 12h2.500v5H31z" fill="#4aa0e8"/><path d="M31 17h2.500v5H31z" fill="#e8963a"/><path d="M31 22h2.500v5H31z" fill="#7ac75a"/><rect width="31.500" height="34" rx="6" fill="url(#cont)"/><circle cx="15.800" cy="16.500" r="9.300" fill="none" stroke="#8a6a3f" stroke-width="1"/><circle cx="15.800" cy="13.500" r="3.400" fill="#90704a"/><path d="M9 22.800c1.500-3.800 12-3.800 13.600 0-1.800 2-4.200 3-6.800 3s-5-1-6.800-3z" fill="#90704a"/></svg></div>
<div class="di" style="left:368px;background:linear-gradient(180deg,#ffffff,#f0f0f0);"><svg width="33.5" height="33.5" viewBox="0 0 34 34" style="position:absolute;left:0;top:0"><circle cx="6.500" cy="8.500" r="2.600" fill="#3b82f6"/><circle cx="6.500" cy="17" r="2.600" fill="#ef4444"/><circle cx="6.500" cy="25.500" r="2.600" fill="#f59e0b"/><circle cx="6.500" cy="8.500" r="3.300" fill="none" stroke="#b9d0f8" stroke-width=".6"/><circle cx="6.500" cy="17" r="3.300" fill="none" stroke="#f8c0c0" stroke-width=".6"/><circle cx="6.500" cy="25.500" r="3.300" fill="none" stroke="#f8dcae" stroke-width=".6"/><path d="M12.500 8.500h17.500M12.500 17h17.500M12.500 25.500h17.500" stroke="#d4d4d6" stroke-width=".9"/></svg></div>
<div class="di" style="left:413px;background:linear-gradient(180deg,#2a2c2c,#141616);"><svg width="33.5" height="33.5" viewBox="0 0 34 34" style="position:absolute;left:0;top:0"><path transform="translate(4.600 10.200) scale(.95)" fill="#fff" d="M9.900 7.400c0-1.500 1.200-2.200 1.300-2.300-.7-1-1.800-1.200-2.200-1.200-.9-.1-1.800.55-2.300.55s-1.200-.54-2-.52C3.700 3.950 2.700 4.500 2.200 5.400c-1.100 1.900-.3 4.600.75 6.100.5.750 1.100 1.580 1.900 1.550.77-.03 1.060-.5 1.990-.5s1.190.5 2 .48c.83-.01 1.350-.75 1.850-1.500.58-.86.820-1.700.830-1.740-.02-.01-1.600-.61-1.620-2.390zM8.400 2.900c.42-.51.700-1.220.630-1.930-.6.020-1.340.400-1.770.910-.39.450-.73 1.170-.64 1.860.670.050 1.360-.340 1.780-.84z"/><text x="16.200" y="23" font-family="Liberation Sans, sans-serif" font-size="13.500" fill="#fff" letter-spacing="-.3">tv</text></svg></div>
<div class="di" style="left:458px;background:linear-gradient(180deg,#b765f0,#7a2fc4);"><svg width="33.5" height="33.5" viewBox="0 0 34 34" style="position:absolute;left:0;top:0"><g fill="none" stroke="#fff" stroke-width="1.600"><path d="M9.300 25A11 11 0 1 1 24.700 25" /><path d="M12.300 20.500A6.300 6.300 0 1 1 21.700 20.500"/></g><circle cx="17" cy="16" r="2.700" fill="#fff"/><path d="M14.700 21.500c0-2 4.600-2 4.600 0l-.8 7.300c-.2 1.500-2.800 1.500-3 0z" fill="#fff"/></svg></div>
<div class="di" style="left:503px;background:linear-gradient(180deg,#3fa6fb,#1773ea);"><svg width="33.5" height="33.5" viewBox="0 0 34 34" style="position:absolute;left:0;top:0"><rect x="9" y="6" width="16" height="10.500" rx="1.200" fill="#f5f5f5"/><circle cx="17" cy="11" r="3.300" fill="#e8b33a"/><path d="M17 11V7.700A3.300 3.300 0 0 1 20.300 11z" fill="#58b95a"/><path d="M17 11h3.300A3.300 3.300 0 0 1 15 13.700z" fill="#e2574c"/><path d="M5.500 17h23l-1 2.300h-21z" fill="#e9eef5"/><path d="M17 19.300V28" stroke="#e9eef5" stroke-width="1.600"/><path d="M11.500 28.500h11" stroke="#e9eef5" stroke-width="1.700" stroke-linecap="round"/></svg></div>
<div class="di" style="left:548px;background:linear-gradient(180deg,#7fe268,#35c43e);"><svg width="33.5" height="33.5" viewBox="0 0 34 34" style="position:absolute;left:0;top:0"><rect x="5.500" y="20" width="4.800" height="8.500" rx="1" fill="#fff"/><rect x="11.700" y="13.500" width="4.800" height="15" rx="1" fill="#fff"/><rect x="17.900" y="6" width="4.800" height="22.500" rx="1" fill="#fff"/><rect x="24.100" y="15.500" width="4.800" height="13" rx="1" fill="#fff"/></svg></div>
<div class="di" style="left:593px;background:linear-gradient(180deg,#fbb540,#ee8a26);"><svg width="33.5" height="33.5" viewBox="0 0 34 34" style="position:absolute;left:0;top:0"><path d="M8.500 26.500l2-6L24 5.500c1.500-1.500 4.500 1 3 3L14 23.500z" fill="#fff"/><path d="M8.500 26.500l2-6 3.500 3z" fill="#f3d9b0"/><path d="M7 29.500h20" stroke="#fff" stroke-width="1" opacity=".9"/></svg></div>
<div class="di" style="left:638px;background:#fdfdfd;"><svg width="33.5" height="33.5" viewBox="0 0 34 34" style="position:absolute;left:0;top:0"><rect x="13" y="4.500" width="16.500" height="15" rx="1.500" fill="#7cd0f5"/><circle cx="13" cy="21" r="8.300" fill="#f0805a"/><path d="M6.500 19c2-6 5-7 5-3s2.500 3.500 4.500-.5 4-3 4.500 0 3-1.500 7-2" fill="none" stroke="#1d3557" stroke-width="1.700" stroke-linecap="round"/></svg></div>
<div class="di" style="left:683px;background:#fdfdfd;"><svg width="33.5" height="33.5" viewBox="0 0 34 34" style="position:absolute;left:0;top:0"><rect x="11" y="5" width="19" height="24" rx="1.500" fill="#1f7244"/><path d="M11 5h9.500v8H11z" fill="#21a366"/><path d="M20.500 5H28.500a1.500 1.500 0 0 1 1.500 1.500V13h-9.500z" fill="#33c481"/><path d="M11 13h9.500v8H11z" fill="#107c41"/><path d="M20.500 13H30v8h-9.500z" fill="#21a366"/><rect x="4" y="10.500" width="13" height="13" rx="1.500" fill="#0e6b38"/><path d="M7.500 13.500l6 7M13.500 13.500l-6 7" stroke="#fff" stroke-width="1.600"/></svg></div>
<div class="di" style="left:728px;background:#fdfdfd;"><svg width="33.5" height="33.5" viewBox="0 0 34 34" style="position:absolute;left:0;top:0"><rect x="11" y="5" width="19" height="24" rx="1.500" fill="#103f91"/><path d="M11 5H28.500A1.500 1.500 0 0 1 30 6.500V11H11z" fill="#41a5ee"/><path d="M11 11h19v6H11z" fill="#2b7cd3"/><path d="M11 17h19v6H11z" fill="#185abd"/><rect x="4" y="10.500" width="13" height="13" rx="1.500" fill="#1550b0"/><path d="M6.500 13.500l1.800 7 2.200-6.500 2.200 6.500 1.800-7" fill="none" stroke="#fff" stroke-width="1.400" stroke-linejoin="round"/></svg></div>
<div class="di" style="left:793px;background:linear-gradient(180deg,#6fe57a,#26c443);"><svg width="33.5" height="33.5" viewBox="0 0 34 34" style="position:absolute;left:0;top:0"><path d="M17 5.500a11.300 11.300 0 0 0-9.700 17.100L5.800 28.200l5.800-1.500A11.300 11.300 0 1 0 17 5.500z" fill="none" stroke="#fff" stroke-width="2"/><path d="M12.800 10.800c-.8.500-1.500 1.700-1.100 3.100.9 3.500 4.100 6.700 7.600 7.700 1.400.4 2.700-.2 3.200-1.200l-2.500-2.100-1.600.9c-1.600-.7-3.100-2.300-3.900-3.900l.9-1.600z" fill="#fff"/></svg></div>
<div class="di" style="left:838px;background:linear-gradient(180deg,#f4502e,#e0341f);"><svg width="33.5" height="33.5" viewBox="0 0 34 34" style="position:absolute;left:0;top:0"><path d="M5 10.500h5l2.300 9.500 3-9.500h3.400l3 9.500 2.300-9.500h5L25 24.500h-4.500L17 15l-3.500 9.500H9z" fill="#fff"/></svg></div>
<div class="di" style="left:883px;overflow:visible;background:radial-gradient(circle at 50% 52%,#f7f7f7 0,#f0f0f0 15.500px,transparent 16px);"><svg width="33.5" height="37.4" viewBox="0 -4 34 38" style="position:absolute;left:0;top:-3.9px"><path d="M14 -4h6v5.500h4.500L17 8.500 9.500 1.500H14z" fill="#53b84c" stroke="#3e9a3a" stroke-width=".6"/><rect x="9.500" y="10.500" width="7" height="7" fill="#f25022"/><rect x="17.500" y="10.500" width="7" height="7" fill="#7fba00"/><rect x="9.500" y="18.500" width="7" height="7" fill="#00a4ef"/><rect x="17.500" y="18.500" width="7" height="7" fill="#ffb900"/></svg></div>
<div class="di" style="left:928px;background:linear-gradient(180deg,#2b1f5e,#20134a);"><svg width="33.5" height="33.5" viewBox="0 0 34 34" style="position:absolute;left:0;top:0"><circle cx="17" cy="18" r="10.800" fill="url(#ffx)"/><circle cx="17.500" cy="18" r="5.200" fill="#6a3fd0"/><path d="M6.500 14c1-4 3.500-6.500 5.500-7 0 2 1 3 2.500 3.500 3-.5 4.500-3 4-6.500 4.500 2 8.500 6 9.500 11 .5 3.500-.5 6.500-2 8.500.8-3.500-.2-7-2.500-9-1.800-1.500-4-1.500-6-.8-1.500-.7-3-.2-4 .8-2-.5-4-.5-7 -.5z" fill="url(#ffx2)"/></svg></div>
<div class="di" style="left:973px;background:linear-gradient(180deg,#3b82fb,#1d5df0);"><svg width="33.5" height="33.5" viewBox="0 0 34 34" style="position:absolute;left:0;top:0"><text x="17" y="20" text-anchor="middle" font-family="Liberation Sans, sans-serif" font-weight="bold" font-size="9" fill="#fff" letter-spacing=".2">zoom</text></svg></div>
<div class="abs" style="left:777.500px;top:8px;width:1px;height:38px;background:rgba(255,255,255,.28)"></div>
<div class="abs" style="left:1022.500px;top:8px;width:1px;height:38px;background:rgba(255,255,255,.28)"></div>
<div class="abs" style="left:1035px;top:11px;width:39px;height:27px;background:#e9e9e9;border-top:5px solid #2e2c2a;box-shadow:0 0 0 .5px #555"><div class="abs" style="left:7px;top:3px;width:24px;height:1px;background:#777;box-shadow:0 3px 0 #999,0 6px 0 #888,0 9px 0 #999,0 12px 0 #888"></div></div>
<div class="abs" style="left:1060px;top:29px;width:13px;height:13px;background:#fdfdfd;border-radius:2.500px"><div class="abs" style="left:2px;top:2.500px;width:9px;height:8px;background:#1e5cbe;border-radius:1px"></div></div>
<svg class="abs" style="left:1082px;top:5px" width="36" height="40" viewBox="0 0 36 40"><path d="M4 8l3 28c.3 2 2 3 4 3h14c2 0 3.700-1 4-3l3-28z" fill="url(#trg)"/><defs><linearGradient id="trg" x1="0" y1="0" x2="1" y2="0"><stop offset="0" stop-color="#7e7d80"/><stop offset=".5" stop-color="#a9a9ac"/><stop offset="1" stop-color="#6e6d70"/></linearGradient></defs><ellipse cx="18" cy="8" rx="14.500" ry="4.500" fill="#d8d8da"/><ellipse cx="18" cy="8" rx="12" ry="3.200" fill="#efefef"/><path d="M8 6l4-4 5 3 5-3.500 6 4.500-3 3H11z" fill="#fafafa" stroke="#c8c8c8" stroke-width=".5"/></svg>
<div class="dot" style="left:22.5px"></div><div class="dot" style="left:68.0px"></div><div class="dot" style="left:158.0px"></div><div class="dot" style="left:698.0px"></div><div class="dot" style="left:743.0px"></div><div class="dot" style="left:808.0px"></div><div class="dot" style="left:853.0px"></div><div class="dot" style="left:898.0px"></div><div class="dot" style="left:943.0px"></div><div class="dot" style="left:988.0px"></div></div><!--DOCKE-->
</body>
</html>
